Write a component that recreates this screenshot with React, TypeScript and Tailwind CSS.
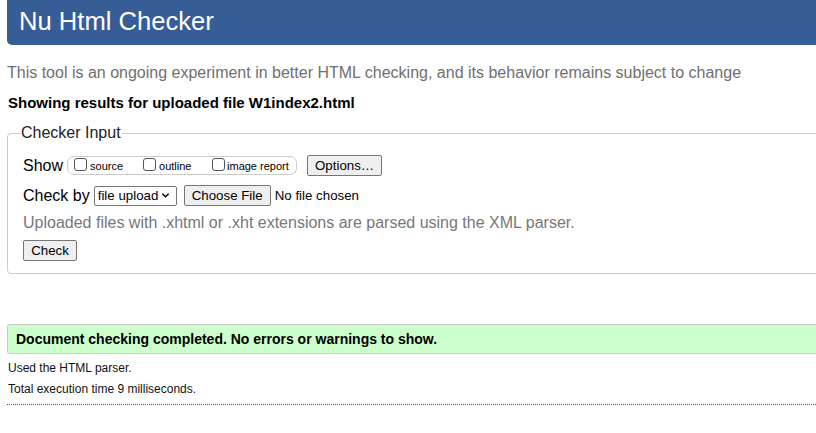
export default function App() {
  return (
    <div className="w-[816px] h-[433px] overflow-hidden bg-white font-['Liberation_Sans',Arial,sans-serif] text-black">
      <div className="w-[840px] pl-[7px]">
        <header className="h-[45px] bg-[#375d96] rounded-bl-[5px] flex items-center pl-[12px]">
          <h1 className="text-white text-[25.6px] leading-none -mt-[1px]">Nu Html Checker</h1>
        </header>

        <p className="mt-[19px] text-[16px] leading-[18px] text-[#6f6f6f]">
          This tool is an ongoing experiment in better HTML checking, and its behavior remains subject to change
        </p>
        <p className="mt-[12px] pl-[1px] text-[15px] leading-[17px] font-bold">
          Showing results for uploaded file W1index2.html
        </p>

        <fieldset className="mt-[13px] border border-[#cccccc] rounded-[4px] px-[12px] pt-[13px] pb-[11px]">
          <legend className="px-[1px] text-[16px] leading-[18px] text-[#222]">Checker Input</legend>
          <div className="pl-[3px] flex flex-col">
            <div className="flex items-center h-[21px]">
              <span className="text-[16px]">Show</span>
              <div className="ml-[4px] h-[19px] w-[230px] border border-[#cccccc] rounded-[7px] flex items-end pb-[1px] pl-[6px]">
                <label className="flex items-end text-[11px] leading-[13px] w-[69px]">
                  <input type="checkbox" className="w-[13px] h-[13px] mr-[3px] mb-[2px] border border-[#555] rounded-[3px] appearance-none" />
                  source
                </label>
                <label className="flex items-end text-[11px] leading-[13px] w-[69px]">
                  <input type="checkbox" className="w-[13px] h-[13px] mr-[3px] mb-[2px] border border-[#555] rounded-[3px] appearance-none" />
                  outline
                </label>
                <label className="flex items-end text-[11px] leading-[13px]">
                  <input type="checkbox" className="w-[13px] h-[13px] mr-[2px] mb-[2px] border border-[#555] rounded-[3px] appearance-none" />
                  image report
                </label>
              </div>
              <button className="ml-[10px] h-[21px] px-[7px] text-[13.3px] border border-[#767676] rounded-[2px] bg-[#efefef]">
                Options…
              </button>
            </div>

            <div className="flex items-center h-[21px] mt-[9px]">
              <span className="text-[16px]">Check by</span>
              <div className="ml-[4px] h-[20px] w-[83px] border border-[#767676] rounded-[2px] flex items-center pl-[3px] text-[13.3px]">
                file upload
                <svg viewBox="0 0 10 10" className="w-[9px] h-[9px] ml-[3px]">
                  <path d="M1.5 3 L5 6.5 L8.5 3" fill="none" stroke="#000" strokeWidth="1.6" />
                </svg>
              </div>
              <button className="ml-[7px] h-[21px] w-[87px] text-[13.3px] border border-[#767676] rounded-[2px] bg-[#efefef]">
                Choose File
              </button>
              <span className="ml-[4px] text-[13.3px]">No file chosen</span>
            </div>

            <p className="mt-[8px] text-[16px] leading-[18px] text-[#777]">
              Uploaded files with .xhtml or .xht extensions are parsed using the XML parser.
            </p>

            <div className="mt-[6px]">
              <button className="h-[21px] w-[54px] text-[13.3px] border border-[#767676] rounded-[2px] bg-[#efefef]">
                Check
              </button>
            </div>
          </div>
        </fieldset>

        <div className="mt-[50px] h-[30px] bg-[#ccffcc] border border-[#cccccc] border-r-0 rounded-l-[3px] flex items-center pl-[8px]">
          <p className="text-[14px] font-bold">Document checking completed. No errors or warnings to show.</p>
        </div>

        <p className="mt-[7px] pl-[1px] text-[12px] leading-[14px] text-[#111]">Used the HTML parser.</p>
        <p className="mt-[7px] pl-[1px] text-[12px] leading-[14px] text-[#111]">Total execution time 9 milliseconds.</p>

        <div className="mt-[8px] border-t border-dotted border-[#555]" />
      </div>
    </div>
  );
}
